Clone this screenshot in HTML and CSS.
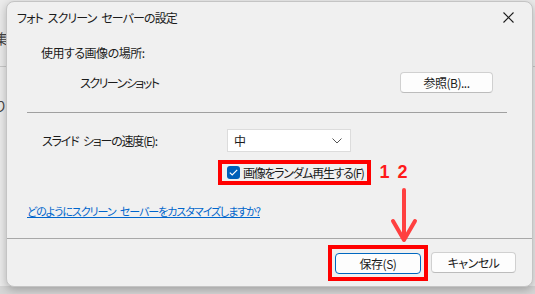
FILE: index.html
```html
<!DOCTYPE html>
<html lang="ja">
  <head>
    <meta charset="UTF-8" />
    <title>フォト スクリーン セーバーの設定</title>
    <link rel="stylesheet" href="styles.css">
  </head>
  <body>
    <div class="desk">
      <!-- window behind the dialog -->
      <div class="behind">
        <div class="behind-row">集</div>
        <div class="behind-line"></div>
        <div class="behind-row">り</div>
      </div>

      <div class="dialog">
        <div class="titlebar">
          <span class="title">フォト スクリーン セーバーの設定</span>
          <span class="close">
            <svg width="11" height="11" viewBox="0 0 11 11"><path d="M0.5 0.5 L10.5 10.5 M10.5 0.5 L0.5 10.5" stroke="#1b1b1b" stroke-width="1.1" fill="none"/></svg>
          </span>
        </div>

        <div class="content">
          <div class="caption">使用する画像の場所:</div>
          <div class="folder-row">
            <span class="path">スクリーンショット</span>
            <button class="btn browse">参照(B)...</button>
          </div>
          <div class="sep"></div>

          <div class="speed-row">
            <span class="speed-label">スライド ショーの速度(E):</span>
            <div class="select">
              <span>中</span>
              <svg width="10" height="6" viewBox="0 0 10 6"><path d="M0.5 0.5 L5 5 L9.5 0.5" stroke="#555" stroke-width="1" fill="none"/></svg>
            </div>
          </div>

          <div class="shuffle-row">
            <label class="mark shuffle">
              <span class="check">
                <svg width="9" height="7" viewBox="0 0 9 7"><path d="M0.8 3.6 L3.2 6 L8.2 0.8" stroke="#fff" stroke-width="1.2" fill="none"/></svg>
              </span>
              <span class="shuffle-text">画像をランダム再生する(F)</span>
            </label>
            <span class="step">1</span>
            <span class="step">2</span>
          </div>

          <a class="help" href="#">どのようにスクリーン セーバーをカスタマイズしますか?</a>
        </div>

        <div class="footer">
          <span class="mark save-mark"><button class="btn primary">保存(S)</button></span>
          <button class="btn cancel">キャンセル</button>
        </div>

        <!-- annotation arrow from step 2 to the save button -->
        <svg class="arrow" width="30" height="56" viewBox="0 0 30 56">
          <path d="M15 2 L15 52 M4 33 L15 52 L26 33" stroke="#ff4040" stroke-width="4" fill="none" stroke-linecap="round" stroke-linejoin="round"/>
        </svg>
      </div>
    </div>
  </body>
</html>
```

FILE: styles.css
```css
* {
  margin: 0;
  padding: 0;
  box-sizing: border-box;
}

body {
  font-family: "Noto Sans CJK JP", "Noto Sans", sans-serif;
  font-size: 12px;
  font-feature-settings: "palt";
  color: #1b1b1b;
  background-color: #d6d6d6;
}

.desk {
  position: relative;
  width: 535px;
  height: 294px;
  overflow: hidden;
}

/* Window behind the dialog */
.behind {
  width: 535px;
  height: 286px;
  background-color: #ebebeb;
  padding-top: 28px;
}

.behind-row {
  margin-left: -6px;
  font-size: 14px;
  height: 20px;
  color: #444;
}

.behind-line {
  height: 1px;
  background-color: #c8c8c8;
  margin: 18px 0 28px;
}

/* Dialog window */
.dialog {
  position: absolute;
  left: 6px;
  top: 1px;
  width: 527px;
  height: 286px;
  background-color: #f0f0f0;
  border: 1px solid #c4c4c4;
  border-radius: 8px;
  box-shadow: 0 3px 10px rgba(0, 0, 0, 0.25);
  display: flex;
  flex-direction: column;
}

.titlebar {
  height: 30px;
  display: flex;
  align-items: center;
  justify-content: space-between;
  padding-left: 10px;
  padding-right: 18px;
}

.title {
  letter-spacing: -0.9px;
  word-spacing: 3px;
}

.close {
  display: flex;
}

.content {
  flex: 1;
  padding: 0 25px 0 20px;
}

.caption {
  margin-top: 13px;
  line-height: 16px;
  padding-left: 14px;
  letter-spacing: -0.5px;
}

.folder-row {
  display: flex;
  align-items: center;
  justify-content: space-between;
  margin-top: 11px;
  padding-left: 53px;
  padding-right: 14px;
}

.path {
  letter-spacing: -1.5px;
}

.btn {
  font-family: inherit;
  font-size: 12px;
  font-feature-settings: "palt";
  color: #1b1b1b;
  background-color: #fdfdfd;
  border: 1px solid #d0d0d0;
  border-bottom-color: #bcbcbc;
  border-radius: 4px;
  height: 21px;
  line-height: 19px;
  letter-spacing: -0.5px;
}

.browse {
  width: 93px;
}

.sep {
  height: 1px;
  background-color: #a0a0a0;
  margin-top: 19px;
}

.speed-row {
  display: flex;
  align-items: center;
  margin-top: 16px;
}

.speed-label {
  width: 200px;
  padding-left: 15px;
  letter-spacing: -1.2px;
  word-spacing: 3px;
}

.select {
  width: 124px;
  height: 23px;
  background-color: #fff;
  border: 1px solid #dcdcdc;
  display: flex;
  align-items: center;
  justify-content: space-between;
  padding: 0 8px 0 6px;
}

.shuffle-row {
  display: flex;
  align-items: center;
  margin-top: 8px;
  padding-left: 191px;
}

/* red annotation frame */
.mark {
  border: 4px solid #ff0000;
}

.shuffle {
  display: flex;
  align-items: center;
  height: 25px;
  padding: 0 4px 0 5px;
  gap: 3px;
}

.shuffle-text {
  letter-spacing: -1.3px;
}

.check {
  width: 13px;
  height: 13px;
  border-radius: 3px;
  background-color: #005fb8;
  display: flex;
  align-items: center;
  justify-content: center;
}

.step {
  font-family: "Liberation Sans", Arial, sans-serif;
  font-weight: bold;
  font-size: 18px;
  color: #ff1a1a;
  margin-left: 8px;
}

.help {
  display: block;
  margin-top: 18px;
  line-height: 16px;
  font-size: 11px;
  color: #0066cc;
  text-decoration: underline;
  letter-spacing: -1.05px;
  word-spacing: 3px;
}

.footer {
  height: 48px;
  border-top: 1px solid #a8a8a8;
  display: flex;
  align-items: center;
  justify-content: flex-end;
  gap: 3px;
  padding-right: 16px;
}

.save-mark {
  display: flex;
  padding: 4px 3px 3px;
}

.primary {
  width: 86px;
  border: 1px solid #0067c0;
}

.cancel {
  width: 85px;
}

.arrow {
  position: absolute;
  left: 382px;
  top: 186px;
}
```
